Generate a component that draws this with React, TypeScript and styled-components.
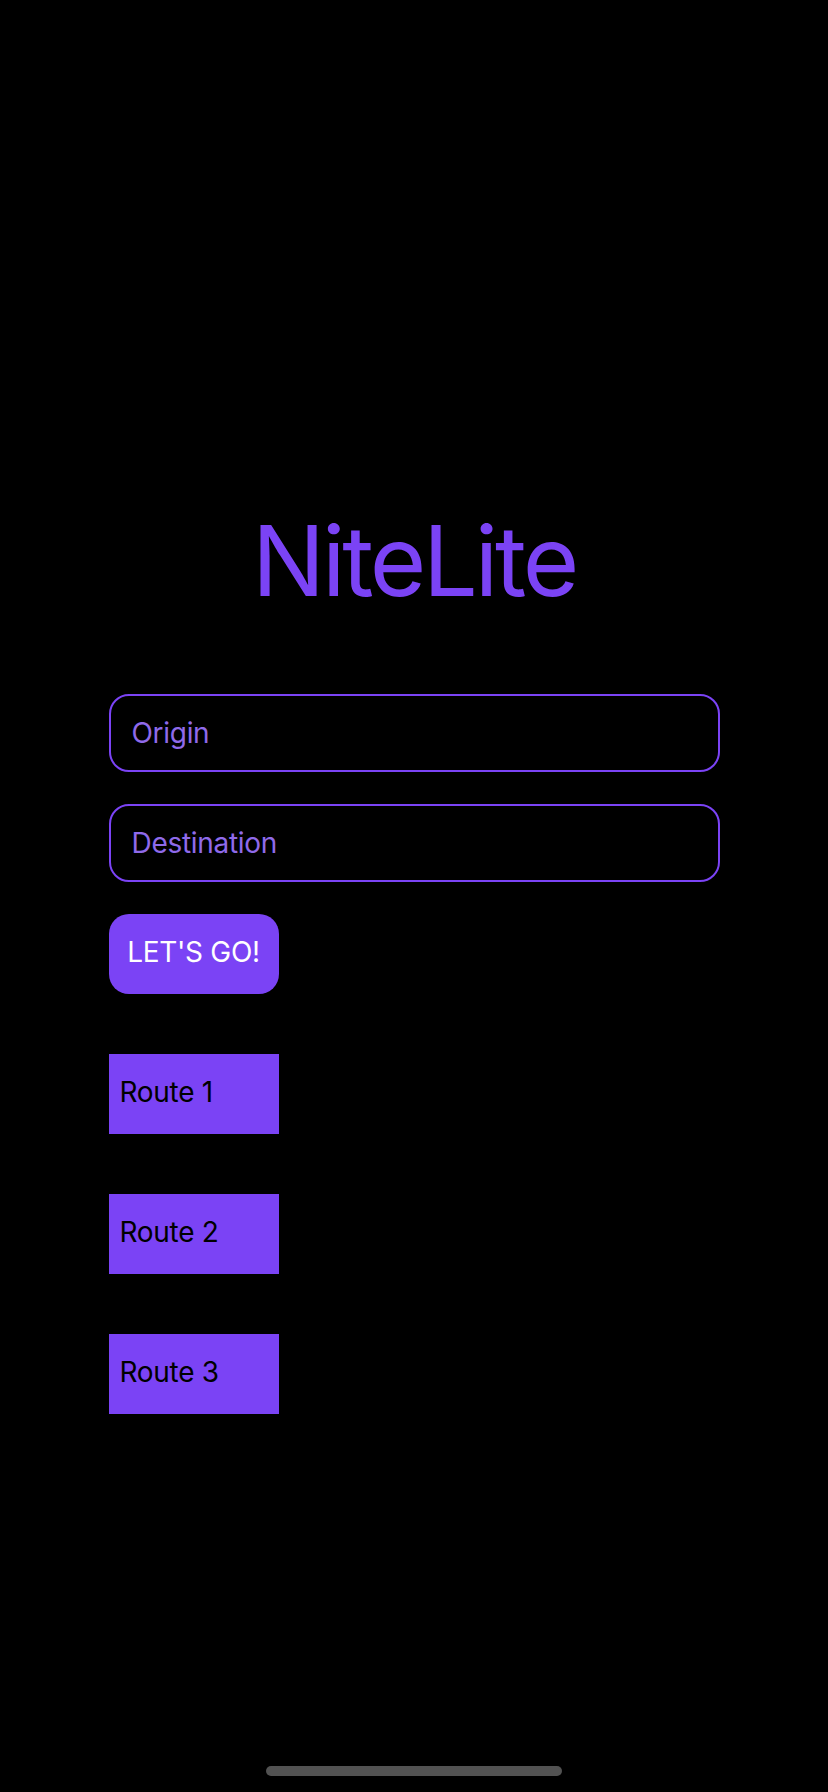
import React from "react";
import styled, { createGlobalStyle } from "styled-components";

const GlobalStyle = createGlobalStyle`
  html, body {
    margin: 0;
    padding: 0;
    background: #000000;
  }
  * { box-sizing: border-box; }
`;

const PURPLE = "#7b43f5";

const Screen = styled.div`
  position: relative;
  width: 828px;
  height: 1792px;
  background: #000000;
  display: flex;
  flex-direction: column;
  align-items: center;
  padding-top: 501px;
  font-family: Inter, "Noto Sans", sans-serif;
  overflow: hidden;
`;

const Title = styled.h1`
  margin: 0;
  font-family: Inter, "Noto Sans", sans-serif;
  font-size: 97px;
  line-height: 120px;
  font-weight: 400;
  color: ${PURPLE};
  letter-spacing: -3.2px;
`;

const Form = styled.div`
  margin-top: 73px;
  width: 611px;
  display: flex;
  flex-direction: column;
  align-items: flex-start;
`;

const Field = styled.input`
  width: 100%;
  height: 78px;
  border: 2px solid ${PURPLE};
  border-radius: 20px;
  background: #000000;
  padding: 0 21px;
  font-family: Inter, "Noto Sans", sans-serif;
  font-size: 28px;
  letter-spacing: -0.3px;
  color: #ffffff;
  outline: none;
  margin-bottom: 32px;

  &::placeholder {
    color: #8f6aea;
  }
`;

const GoButton = styled.button`
  width: 170px;
  height: 80px;
  border: none;
  border-radius: 20px;
  background: ${PURPLE};
  color: #ffffff;
  font-family: Inter, "Noto Sans", sans-serif;
  font-size: 28px;
  letter-spacing: -0.3px;
  padding: 0 0 4px;
  cursor: pointer;
`;

const RouteList = styled.div`
  margin-top: 60px;
  display: flex;
  flex-direction: column;
  gap: 60px;
`;

const RouteItem = styled.div`
  width: 170px;
  height: 80px;
  background: ${PURPLE};
  color: #000000;
  display: flex;
  align-items: center;
  padding: 0 0 5px 11px;
  font-family: Inter, "Noto Sans", sans-serif;
  font-size: 28px;
  letter-spacing: -0.3px;
`;

const HomeIndicator = styled.div`
  position: absolute;
  left: 266px;
  top: 1766px;
  width: 296px;
  height: 10px;
  border-radius: 5px;
  background: #525252;
`;

export default function App() {
  return (
    <>
      <GlobalStyle />
      <Screen>
        <Title>NiteLite</Title>
        <Form>
          <Field placeholder="Origin" />
          <Field placeholder="Destination" />
          <GoButton>LET'S GO!</GoButton>
          <RouteList>
            {["Route 1", "Route 2", "Route 3"].map((r) => (
              <RouteItem key={r}>{r}</RouteItem>
            ))}
          </RouteList>
        </Form>
        <HomeIndicator />
      </Screen>
    </>
  );
}
